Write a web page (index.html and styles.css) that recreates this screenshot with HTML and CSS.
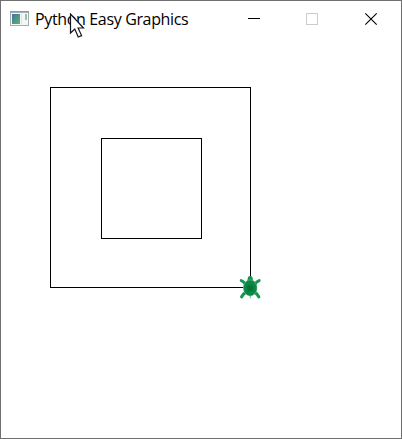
FILE: index.html
```html
<!DOCTYPE html>
<html lang="en">
<head>
<meta charset="utf-8">
<title>Python Easy Graphics</title>
<link rel="stylesheet" href="styles.css">
</head>
<body>
<main class="window">
  <header class="titlebar">
    <svg class="app-icon" width="19" height="15" viewBox="0 0 19 15">
      <defs><linearGradient id="screen" x1="0" y1="0" x2="1" y2="1"><stop offset="0" stop-color="#3f73a8"/><stop offset="1" stop-color="#5fb56c"/></linearGradient></defs>
      <rect x=".5" y=".5" width="18" height="14" fill="#f5f6f7" stroke="#a5adb3"/>
      <path d="M0 1H19" stroke="#8d969e" stroke-width="1.5"/>
      <rect x="2" y="3" width="8" height="10" fill="url(#screen)"/>
      <path d="M11.5 3v10" stroke="#d9e2e8"/>
      <rect x="15" y="3" width="2" height="6" fill="#8fc8a5"/>
    </svg>
    <h1 class="title">Python Easy Graphics</h1>
    <svg class="controls" width="130" height="14" viewBox="0 0 130 14" fill="none">
      <path d="M0 6.5h12" stroke="#000"/>
      <rect x="58.5" y="1.5" width="11" height="11" stroke="#ccc"/>
      <path d="M117.3 1.3l11.4 11.4M128.7 1.3l-11.4 11.4" stroke="#000" stroke-width="1.1"/>
    </svg>
    <svg class="cursor" width="17" height="26" viewBox="0 0 17 26">
      <path d="M1.5 1v19l4.3-4 3.4 8 3.4-1.4-3.5-7.6h5.4z" fill="#fff" stroke="#14141e" stroke-width="1.2"/>
    </svg>
  </header>
  <svg class="canvas" width="400" height="400" viewBox="0 0 400 400">
    <g fill="none" stroke="#000">
      <rect x="49.5" y="49.5" width="200" height="200"/>
      <rect x="100.5" y="100.5" width="100" height="100"/>
    </g>
    <g transform="translate(249.2 249.9)" stroke-linecap="round">
      <path d="M-4.5-3.5Q-6.2-6.4-8.9-7.3M4.5-3.5Q6.2-6.4 8.9-7.3M-4.5 4.5Q-7.4 6.2-8.6 8.9M4.5 4.5Q7.4 6.2 8.6 8.9" fill="none" stroke="#169452" stroke-width="3.1"/>
      <ellipse cy="-8.7" rx="2.6" ry="3.2" fill="#169452"/>
      <path d="M0 7v3" stroke="#5fb586" stroke-width="1"/>
      <ellipse rx="7.1" ry="8.3" fill="#54b17c"/>
      <ellipse rx="6.4" ry="7.6" fill="#0b8743"/>
      <path d="M-2.3-3h4.6l1.5 3-1.5 3.5h-4.6l-1.5-3.5z" fill="#00763a" stroke="#128746" stroke-width=".6"/>
    </g>
  </svg>
</main>
</body>
</html>
```
FILE: styles.css
```css
* { box-sizing: border-box; }
body { margin: 0; background: #fff; }
.window {
  width: 402px;
  height: 439px;
  border: 1px solid #707070;
  background: #fff;
  overflow: hidden;
}
.titlebar {
  position: relative;
  display: flex;
  align-items: center;
  height: 37px;
  padding: 0 23px 2px 9px;
}
.app-icon { flex: none; }
.title {
  margin: 0 0 0 6px;
  font: 400 16px/22px "Open Sans", "Noto Sans", sans-serif;
  letter-spacing: -.35px;
  white-space: nowrap;
  color: #000;
}
.controls { flex: none; margin-left: auto; }
.cursor { position: absolute; left: 68px; top: 12px; }
.canvas { display: block; }
```
